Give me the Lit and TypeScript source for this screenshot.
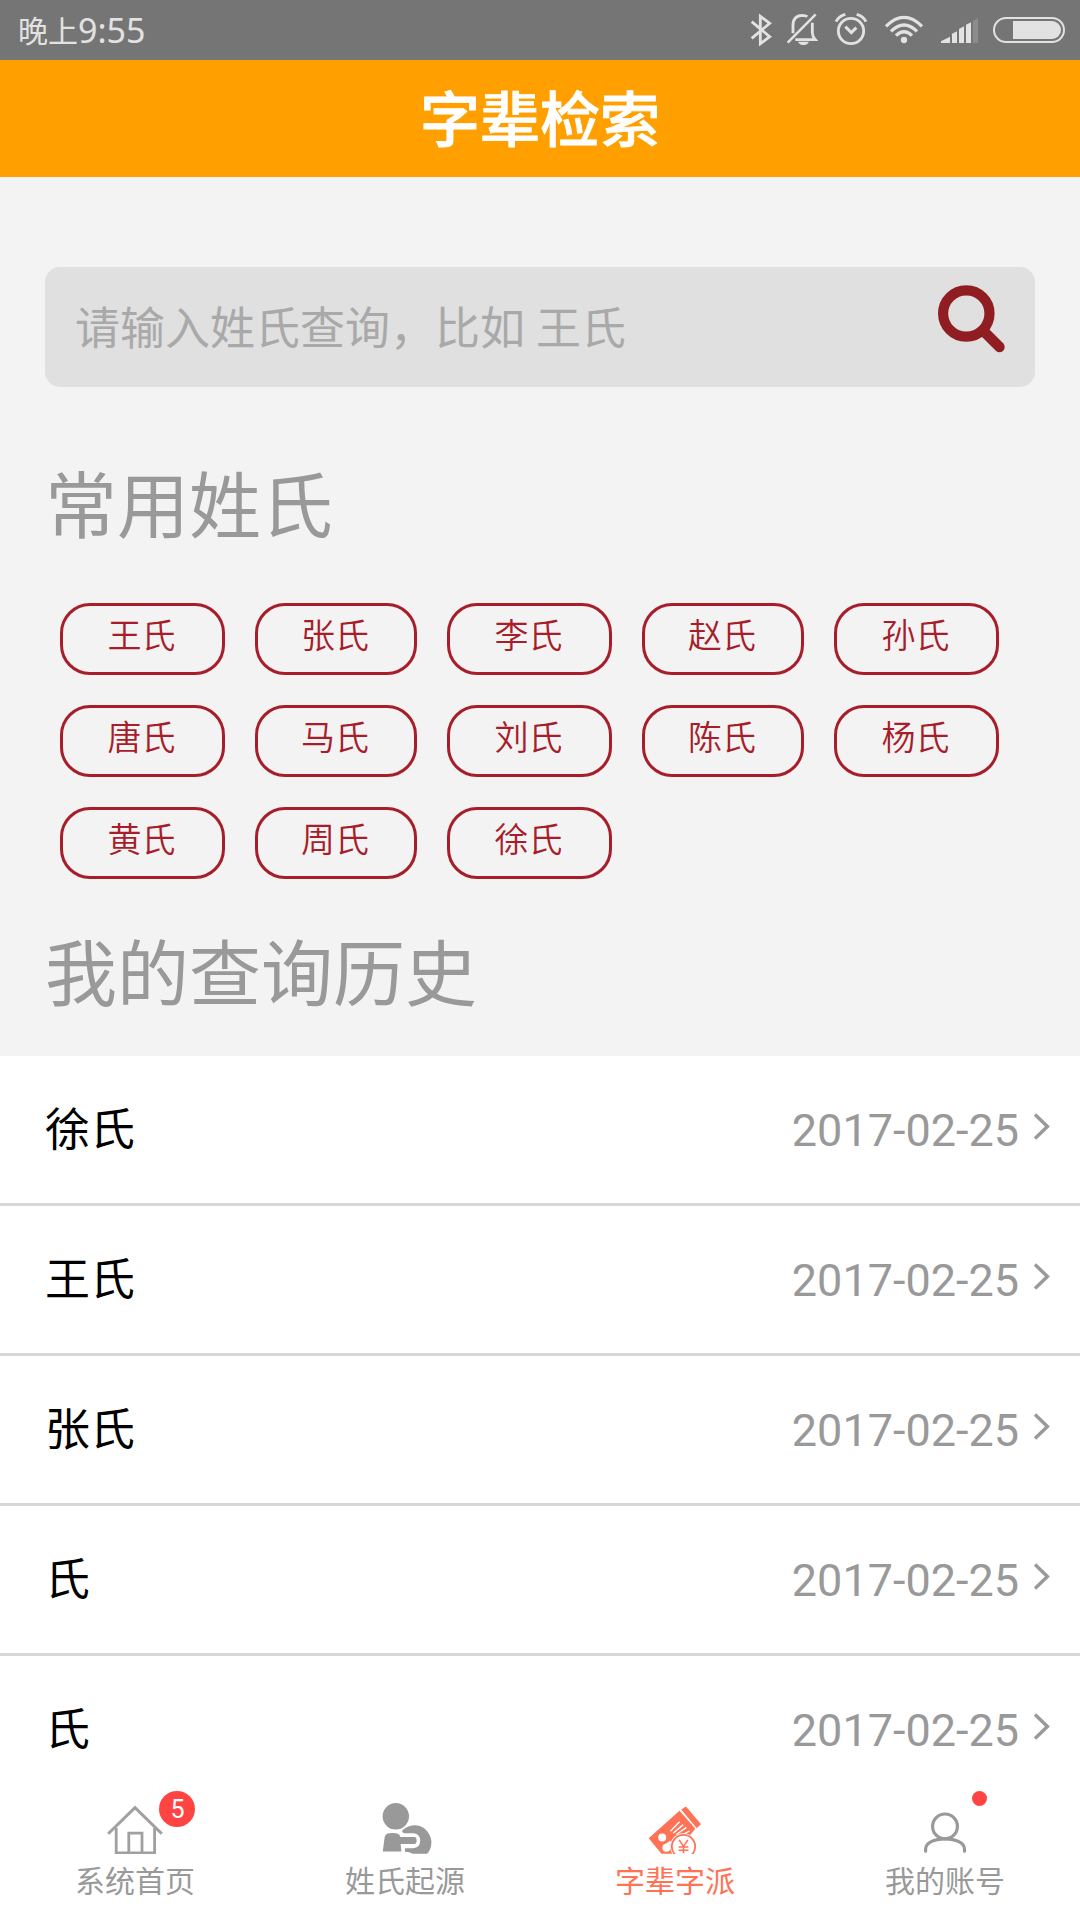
import { LitElement, html, svg, css } from "lit";
import { customElement } from "lit/decorators.js";

const SURNAMES = ["王氏", "张氏", "李氏", "赵氏", "孙氏", "唐氏", "马氏", "刘氏", "陈氏", "杨氏", "黄氏", "周氏", "徐氏"];

const HISTORY = [
  { name: "徐氏", date: "2017-02-25" },
  { name: "王氏", date: "2017-02-25" },
  { name: "张氏", date: "2017-02-25" },
  { name: "氏", date: "2017-02-25" },
  { name: "氏", date: "2017-02-25" },
];

const homeIcon = svg`
  <g fill="none" stroke="#a0a0a0" stroke-width="2.8">
    <path d="M33.2 38.8 60 12.6 86.8 38.8" stroke-width="3"/>
    <path d="M41.2 33V57.8H79.6V33"/>
    <path d="M53.8 58V38.2H67V58"/>
  </g>`;

const originIcon = svg`
  <g fill="#999">
    <circle cx="50.8" cy="21.3" r="13.2"/>
    <path d="M42.5 38.6Q46 37.4 51 38.2Q54.6 38.8 55.4 42H69.5Q71.6 42.2 71.6 45.5Q71.6 48.8 69.5 49H55.6L56.4 56.4H37.8L39.6 42.5Q40 39.6 42.5 38.6Z"/>
    <path d="M57.4 35.2Q63 30.2 70.5 30.2Q78 30.6 82.4 36.4Q86.4 41.8 86.4 47.4Q86.2 54.6 82 58.8H68Q64 56.8 60 56.8V53.2H68Q75.2 52.6 75.2 45.5Q75 38.6 68 38.2H59.6Q56.6 37.6 57.4 35.2Z"/>
  </g>`;

const ticketIcon = svg`
  <g>
    <path d="M33.7 43.2 64.5 15.7 80.5 33.5 76 39 60 58.7H46.5Z" fill="#ff7256"/>
    <path d="M66.2 14.4 71 11.4 86 29.3 81.6 33.3Z" fill="#ff7256"/>
    <path d="M65.2 14.8 81.2 33.8" stroke="#fff" stroke-width="1.5" stroke-dasharray="2.6 1.2" fill="none"/>
    <circle cx="47.2" cy="42.6" r="4" fill="#fff"/>
    <circle cx="51.4" cy="52.8" r="4" fill="#fff"/>
    <path d="M51 50.5 56 47" stroke="#fff" stroke-width="3"/>
    <path d="M55.4 36.2 64.6 26.8M58.2 38.2 68.2 29.6M61.4 39.5 71.4 32.4M68 39.5 74.6 35.8" stroke="#fff" stroke-width="1.4"/>
    <circle cx="68.5" cy="51.6" r="13.4" fill="#fff"/>
    <circle cx="68.5" cy="51.6" r="11.7" fill="none" stroke="#ff7256" stroke-width="1.8"/>
    <path d="M64.2 45 68.5 51.4 72.8 45M68.5 51.4V58.2M63.6 52H73.4M63.6 55.2H73.4" fill="none" stroke="#ff7256" stroke-width="1.5"/>
  </g>`;

const accountIcon = svg`
  <g fill="none" stroke="#999" stroke-width="3.2" stroke-linecap="round">
    <circle cx="60" cy="31.4" r="12.4"/>
    <path d="M40.6 56.2V54C40.6 48 49 43.8 60 43.8S79.5 48 79.5 54V56.2"/>
  </g>`;

const TABS = [
  { label: "系统首页", icon: homeIcon, badge: "5" },
  { label: "姓氏起源", icon: originIcon },
  { label: "字辈字派", icon: ticketIcon, active: true },
  { label: "我的账号", icon: accountIcon, dot: true },
];

@customElement("status-bar")
class StatusBar extends LitElement {
  static styles = css`
    :host {
      display: flex;
      align-items: center;
      height: 60px;
      box-sizing: border-box;
      padding: 0 14px 0 18px;
      background: #757575;
      color: #e2e2e2;
    }
    .time {
      flex: 1;
      display: flex;
      align-items: center;
      font: 30px/40px "Noto Sans CJK SC", sans-serif;
    }
    .day {
      padding-bottom: 3px;
    }
    .clock {
      font: 34px/40px "Noto Sans", sans-serif;
    }
    .icons {
      display: flex;
      gap: 16px;
    }
    .icons svg {
      display: block;
      height: 60px;
    }
    .bt { margin-right: -2px; }
    .signal { margin-right: -3px; }
  `;

  render() {
    return html`
      <div class="time"><span class="day">晚上</span><span class="clock">9:55</span></div>
      <div class="icons">
        <svg class="bt" width="22" viewBox="90 0 66 180">
          <path d="M95 65 149 110 121 131V49L149 70 95 115" fill="none" stroke="#e2e2e2" stroke-width="8.5"/>
        </svg>
        <svg width="32" viewBox="198 0 96 180">
          <g fill="none" stroke="#e2e2e2" stroke-width="8.5">
            <path d="M219 100V76Q219 47 247 46Q256 46 262 50"/>
            <path d="M226 119H286Q277 109 277 98V68"/>
            <path d="M203 128 287 43" stroke-width="7.5"/>
          </g>
          <path d="M234 125H267Q262 135 250 135Q239 135 234 125Z" fill="#e2e2e2"/>
        </svg>
        <svg width="34" viewBox="342 0 102 180">
          <g fill="none" stroke="#e2e2e2">
            <circle cx="393" cy="93" r="38" stroke-width="8.5"/>
            <path d="M376 80 394 98 409 83" stroke-width="9"/>
            <path d="M348 65Q356 49 376 43M438 65Q430 49 410 43" stroke-width="9"/>
          </g>
        </svg>
        <svg width="40" viewBox="492 0 120 180">
          <g fill="none" stroke="#e2e2e2" stroke-width="10">
            <path d="M498 79Q552 25 606 79"/>
            <path d="M513 94Q552 56 591 94"/>
            <path d="M528 107Q552 84 576 107"/>
          </g>
          <circle cx="552" cy="120" r="9.5" fill="#e2e2e2"/>
        </svg>
        <svg class="signal" width="39" viewBox="660 0 117 180">
          <path d="M663 129V124L690 110V129ZM696 129V101L711 94V129ZM717 129V87L732 79V129ZM738 129V74L753 67V129Z" fill="#e2e2e2"/>
          <path d="M759 129V62L774 54V129Z" fill="#8c8c8c"/>
        </svg>
        <svg width="74" viewBox="816 0 222 180">
          <rect x="822" y="54" width="210" height="72" rx="36" fill="none" stroke="#e2e2e2" stroke-width="6"/>
          <path d="M879 63H996A27 27 0 0 1 996 117H879Z" fill="#e2e2e2"/>
        </svg>
      </div>
    `;
  }
}

@customElement("tab-bar")
class TabBar extends LitElement {
  static styles = css`
    :host {
      display: grid;
      grid-template-columns: repeat(4, 1fr);
      height: 135px;
      background: #fff;
    }
    .tab {
      display: flex;
      flex-direction: column;
      align-items: center;
      padding-top: 10px;
      color: #999;
      font: 30px/40px "Noto Sans CJK SC", sans-serif;
    }
    .tab.active { color: #ff7256; }
    .icon {
      position: relative;
      width: 120px;
      height: 64px;
    }
    .icon svg { display: block; }
    .badge {
      position: absolute;
      left: 84px;
      top: -4px;
      width: 36px;
      height: 36px;
      border-radius: 50%;
      background: #ff4444;
      color: #fff;
      text-align: center;
      text-indent: 1px;
      font: 25px/38px Roboto, sans-serif;
    }
    .dot {
      position: absolute;
      left: 87px;
      top: -4px;
      width: 15px;
      height: 15px;
      border-radius: 50%;
      background: #ff4444;
    }
  `;

  render() {
    return TABS.map(
      (t) => html`
        <div class="tab ${t.active ? "active" : ""}">
          <div class="icon">
            <svg width="120" height="59" viewBox="0 0 120 59">${t.icon}</svg>
            ${t.badge ? html`<span class="badge">${t.badge}</span>` : ""}
            ${t.dot ? html`<span class="dot"></span>` : ""}
          </div>
          <span>${t.label}</span>
        </div>
      `
    );
  }
}

@customElement("app-root")
class AppRoot extends LitElement {
  static styles = css`
    :host {
      display: flex;
      flex-direction: column;
      height: 1920px;
      overflow: hidden;
      background: #f3f3f3;
      font-family: "Noto Sans CJK SC", sans-serif;
    }
    .header {
      flex: none;
      height: 117px;
      box-sizing: border-box;
      padding-bottom: 6px;
      display: flex;
      align-items: center;
      justify-content: center;
      background: #ffa000;
      color: #fff;
      font-size: 60px;
      line-height: 80px;
      font-weight: 500;
      -webkit-text-stroke: 0.8px #fff;
    }
    .search {
      flex: none;
      display: flex;
      align-items: center;
      justify-content: space-between;
      box-sizing: border-box;
      height: 120px;
      margin: 90px 45px 0;
      padding: 0 25px 2px 30px;
      border-radius: 15px;
      background: #e0e0e0;
      color: #a9a9a9;
      font-size: 45px;
      line-height: 60px;
      word-spacing: 1px;
    }
    .search svg {
      display: block;
      margin-bottom: 12px;
    }
    .title {
      flex: none;
      margin: 74px 45px 62px;
      color: #999;
      font-size: 72px;
      line-height: 80px;
    }
    .title.history { margin: 50px 45px 47px; }
    .chips {
      flex: none;
      display: grid;
      grid-template-columns: 165px 162px 165px 162px 165px;
      gap: 30px;
      padding-left: 60px;
    }
    .chip {
      box-sizing: border-box;
      height: 72px;
      padding: 0 2px 10px 0;
      display: flex;
      align-items: center;
      justify-content: center;
      border: 3px solid #a71d2a;
      border-radius: 30px;
      color: #a71d2a;
      font-size: 34px;
      line-height: 44px;
      font-weight: 350;
    }
    .list {
      flex: 1;
      min-height: 0;
      overflow: hidden;
      background: #fff;
    }
    .row {
      display: flex;
      align-items: center;
      box-sizing: border-box;
      height: 150px;
      padding: 0 30px 0 45px;
      border-bottom: 3px solid #d7d7d7;
    }
    .name {
      flex: 1;
      padding-bottom: 5px;
      color: #000;
      font-size: 45px;
      line-height: 60px;
    }
    .date {
      padding-top: 2px;
      color: #999;
      font: 45px/60px Roboto, sans-serif;
    }
    .row svg {
      display: block;
      margin: 0 0 7px 14px;
    }
    tab-bar { flex: none; }
  `;

  render() {
    return html`
      <status-bar></status-bar>
      <div class="header">字辈检索</div>
      <div class="search">
        <span>请输入姓氏查询，比如 王氏</span>
        <svg width="74" height="74" viewBox="0 0 74 74" fill="none" stroke="#8f1d22" stroke-linecap="round">
          <circle cx="30.3" cy="30.5" r="23.2" stroke-width="10.2"/>
          <path d="M48 48.5 63.5 64" stroke-width="10.4"/>
        </svg>
      </div>
      <div class="title">常用姓氏</div>
      <div class="chips">${SURNAMES.map((n) => html`<span class="chip">${n}</span>`)}</div>
      <div class="title history">我的查询历史</div>
      <div class="list">
        ${HISTORY.map(
          (r) => html`
            <div class="row">
              <span class="name">${r.name}</span>
              <span class="date">${r.date}</span>
              <svg width="17" height="27" viewBox="0 0 17 27">
                <path d="M2 1.6 14.4 13.5 2 25.4" fill="none" stroke="#999" stroke-width="3.4"/>
              </svg>
            </div>
          `
        )}
      </div>
      <tab-bar></tab-bar>
    `;
  }
}
